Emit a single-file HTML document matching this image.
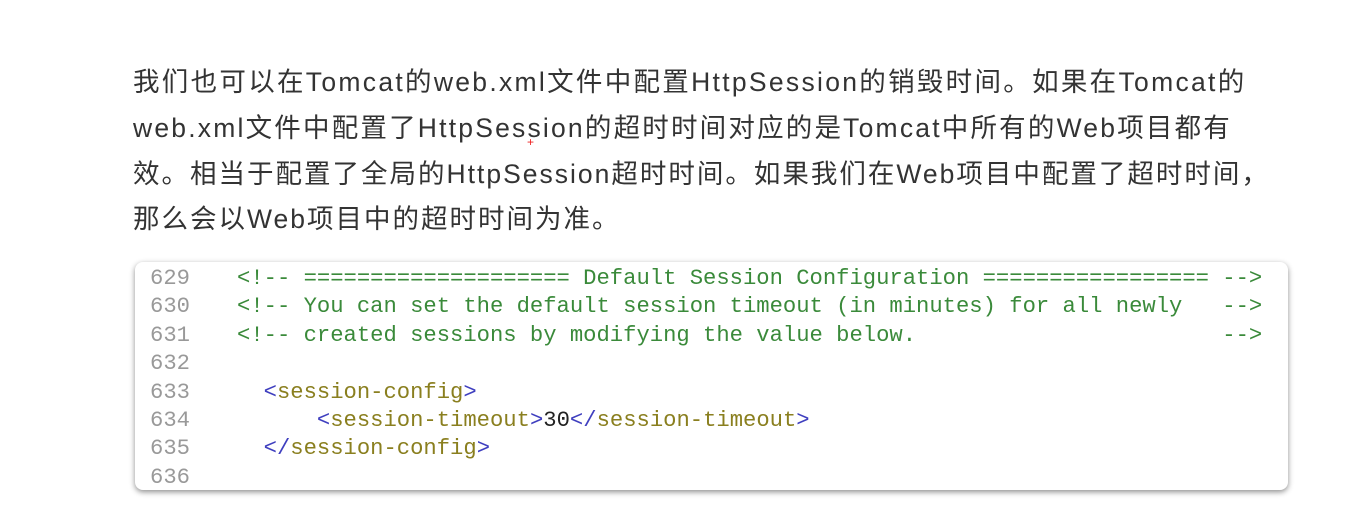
<!DOCTYPE html>
<html><head><meta charset="utf-8"><style>
body{margin:0;width:1361px;height:527px;background:#fff;overflow:hidden;position:relative}
.p{position:absolute;left:133px;font-family:"Liberation Sans","Noto Sans CJK SC",sans-serif;font-size:26.5px;color:#333;white-space:nowrap;letter-spacing:2.2px}
.box{position:absolute;left:135px;top:262px;width:1153px;height:228px;background:#fff;border-radius:8px;box-shadow:0 2px 6px rgba(0,0,0,.45)}
.c{position:absolute;font-family:"Liberation Mono",monospace;font-size:22.2px;white-space:pre;line-height:28.4px}
.ln{left:150px;color:#999;top:265px}
.code{left:237px;top:265px;color:#3a8a3a}
.t{color:#3f3fbf}.n{color:#8a7f1f}.k{color:#222}
</style></head><body>
<div class="p" style="top:60px;letter-spacing:2.3px">我们也可以在Tomcat的web.xml文件中配置HttpSession的销毁时间。如果在Tomcat的</div>
<div class="p" style="top:106px">web.xml文件中配置了HttpSession的超时时间对应的是Tomcat中所有的Web项目都有</div>
<div class="p" style="top:152px;letter-spacing:2px">效。相当于配置了全局的HttpSession超时时间。如果我们在Web项目中配置了超时时间，</div>
<div class="p" style="top:197px;letter-spacing:2px">那么会以Web项目中的超时时间为准。</div>
<div style="position:absolute;left:527px;top:135px;color:#e22;font:12px sans-serif">+</div>
<div class="box"></div>
<div class="c ln">629
630
631
632
633
634
635
636</div>
<div class="c code">&lt;!-- ==================== Default Session Configuration ================= --&gt;
&lt;!-- You can set the default session timeout (in minutes) for all newly   --&gt;
&lt;!-- created sessions by modifying the value below.                       --&gt;

  <span class="t">&lt;</span><span class="n">session-config</span><span class="t">&gt;</span>
      <span class="t">&lt;</span><span class="n">session-timeout</span><span class="t">&gt;</span><span class="k">30</span><span class="t">&lt;/</span><span class="n">session-timeout</span><span class="t">&gt;</span>
  <span class="t">&lt;/</span><span class="n">session-config</span><span class="t">&gt;</span>
</div>
</body></html>
